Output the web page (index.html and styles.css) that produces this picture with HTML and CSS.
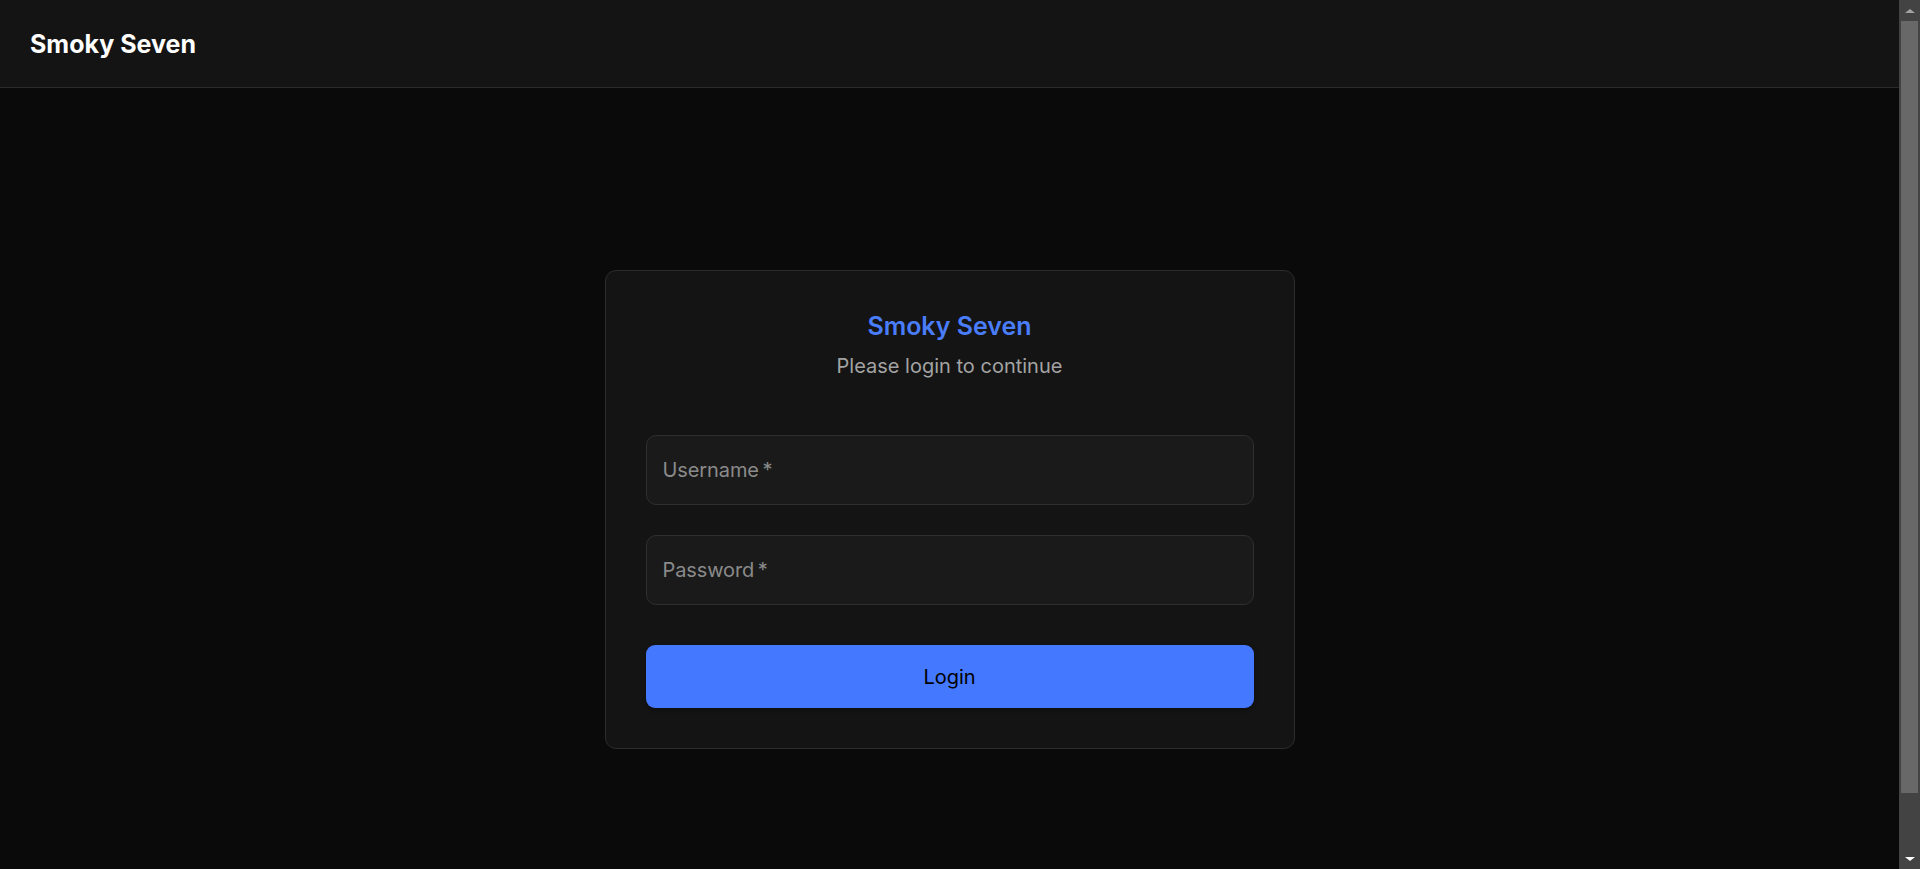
FILE: index.html
```html
<!DOCTYPE html>
<html lang="en">
<head>
<meta charset="utf-8">
<title>Smoky Seven</title>
<link rel="stylesheet" href="styles.css">
</head>
<body>
<div class="app">
  <div class="viewport">
    <header class="topbar">
      <div class="brand">Smoky Seven</div>
    </header>
    <main class="main">
      <form class="card" onsubmit="return false;">
        <h1 class="card-title">Smoky Seven</h1>
        <p class="card-sub">Please login to continue</p>
        <div class="fields">
          <label class="field"><span class="field-label">Username&thinsp;*</span></label>
          <label class="field"><span class="field-label">Password&thinsp;*</span></label>
        </div>
        <button class="btn" type="submit">Login</button>
      </form>
    </main>
  </div>
  <div class="scrollbar" aria-hidden="true">
    <div class="sb-btn"><span class="tri tri-up"></span></div>
    <div class="sb-track"><div class="sb-thumb"></div></div>
    <div class="sb-btn"><span class="tri tri-down"></span></div>
  </div>
</div>
</body>
</html>
```
FILE: styles.css
```css
html, body {
  margin: 0;
  height: 100%;
  overflow: hidden;
  background: #0a0a0a;
}
body {
  color: #ffffff;
  font-family: Inter, "Noto Sans", sans-serif;
}
.app {
  display: flex;
  height: 100vh;
}
.viewport {
  flex: 1;
  min-width: 0;
  overflow: hidden;
}
.topbar {
  height: 87px;
  border-bottom: 1px solid #2b2b2b;
  background: #141414;
  display: flex;
  align-items: center;
  padding: 0 30px;
}
.brand {
  font-size: 25px;
  font-weight: 700;
  color: #ffffff;
}
.main {
  height: 843px;
  display: flex;
  align-items: center;
  justify-content: center;
}
.card {
  width: 608px;
  padding: 40px;
  background: #141414;
  border: 1px solid #2c2c2c;
  border-radius: 11px;
  display: flex;
  flex-direction: column;
}
.card-title {
  margin: 0;
  text-align: center;
  font-size: 25px;
  line-height: 30px;
  font-weight: 600;
  color: #4a7dfa;
}
.card-sub {
  margin: 10px 0 0;
  text-align: center;
  font-size: 20px;
  line-height: 30px;
  color: #a3a3a3;
}
.fields {
  margin-top: 54px;
  display: flex;
  flex-direction: column;
  gap: 30px;
}
.field {
  height: 68px;
  box-sizing: content-box;
  border: 1px solid #2f2f2f;
  border-radius: 10px;
  background: #1a1a1a;
  display: flex;
  align-items: center;
  padding: 0 16px;
}
.field-label {
  font-size: 20px;
  color: #8a8a8a;
  letter-spacing: -0.1px;
}
.btn {
  margin-top: 40px;
  height: 63px;
  border: none;
  border-radius: 9px;
  background: #4478ff;
  color: #000000;
  font-family: Inter, "Noto Sans", sans-serif;
  font-size: 20px;
  font-weight: 400;
  cursor: pointer;
  box-shadow: 0 2px 4px rgba(0,0,0,0.35);
}
.scrollbar {
  width: 21px;
  flex: none;
  background: #434343;
  display: flex;
  flex-direction: column;
}
.sb-btn {
  height: 21px;
  display: flex;
  align-items: center;
  justify-content: center;
}
.sb-track {
  flex: 1;
  padding: 0 2px 55px;
}
.sb-thumb {
  height: 100%;
  background: #686868;
}
.tri {
  width: 0;
  height: 0;
  border-left: 5px solid transparent;
  border-right: 5px solid transparent;
}
.tri-up {
  border-bottom: 4px solid #a3a3a3;
}
.tri-down {
  border-top: 4px solid #ffffff;
}
```
